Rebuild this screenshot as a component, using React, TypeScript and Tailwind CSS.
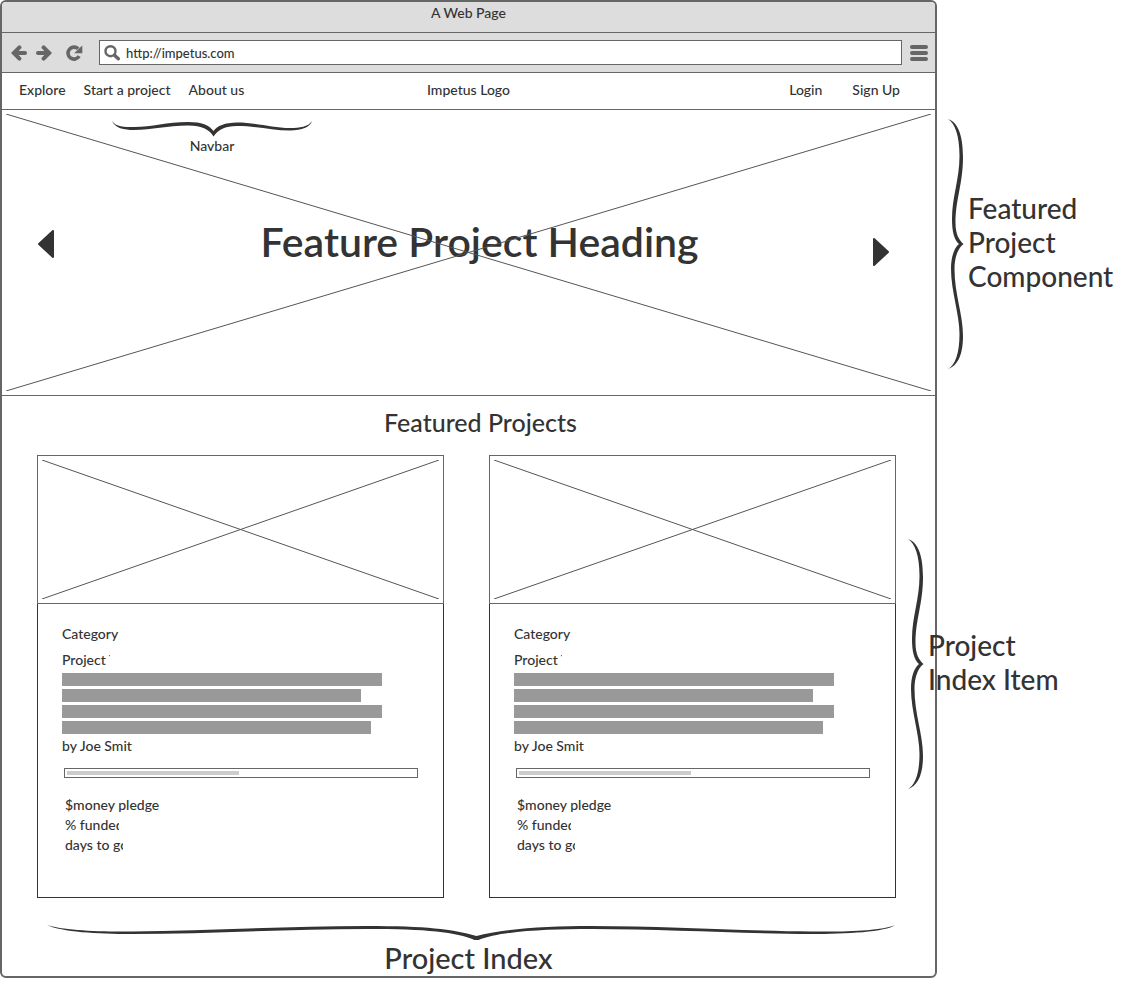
import React from "react";

const LINK = "whitespace-nowrap hover:underline";

function Cross() {
  return (
    <svg aria-hidden="true" className="pointer-events-none absolute inset-1 h-[calc(100%-8px)] w-[calc(100%-8px)]" viewBox="0 0 100 100" preserveAspectRatio="none" fill="none" stroke="#555">
      <path d="M0 0L100 100M0 100L100 0" vectorEffect="non-scaling-stroke" />
    </svg>
  );
}

function SideBrace() {
  return (
    <svg aria-hidden="true" className="h-[250px] w-4 shrink-0" viewBox="0 0 16 250" fill="#333">
      <path d="M0 0C9 3 15 14 15 38C15 65 7.5 80 7.5 104C7.5 115 11 121 15.5 125C9 130 6.5 140 6.5 150C6.5 175 15 195 15 217C15 237 9 247 0 250C7 246 11.5 235 11.5 215C11.5 195 3 172 3 150C3 138 6 129 11 125C6 121 4 112 4 100C4 78 11.5 60 11.5 37C11.5 17 7 4 0 0Z" />
    </svg>
  );
}

function NavBrace() {
  return (
    <svg aria-hidden="true" className="h-4 w-[200px]" viewBox="0 0 200 16" fill="#333">
      <path d="M0 0C3 7 12 9 22 9C40 9 55 4.5 76 4.5C90 4.5 98 9 101.5 15.5C106 9 113 5 125 5C145 5 160 9.5 178 9.5C190 9.5 198 6 200 0C196 6 188 7 178 7C160 7 145 1.5 125 1.5C113 1.5 105 5 101.5 10C97 4 90 1 76 1C55 1 40 6 22 6C12 6 4 6 0 0Z" />
    </svg>
  );
}

function IndexBrace() {
  return (
    <svg aria-hidden="true" className="h-4 w-full" viewBox="0 0 850 16" preserveAspectRatio="none" fill="#333">
      <path d="M0 0C15 7 50 9 85 9C160 9 240 4 320 4C380 4 410 7 428 15H432C455 6 500 4 545 4C620 4 700 9 765 9C800 9 840 7 849 0C835 6 800 7 765 6.5C700 6 620 1 545 1C500 1 455 4 430 11C405 4 380 1 320 1C240 1 160 6 85 6.5C50 7 15 5 0 0Z" />
    </svg>
  );
}

function BackIcon() {
  return (
    <svg aria-hidden="true" className="size-4" viewBox="0 0 16 16" fill="none" stroke="#666" strokeWidth="4">
      <path d="M14 8H5" strokeLinecap="round" />
      <path d="M8.4 2.4L2.8 8L8.4 13.6" strokeLinecap="round" strokeLinejoin="miter" />
    </svg>
  );
}

function ReloadIcon() {
  return (
    <svg aria-hidden="true" className="h-4 w-[17px]" viewBox="0 0 17 16" fill="none">
      <path d="M12.2 3.8A6 6 0 1 0 13.2 11.2" stroke="#666" strokeWidth="3.6" />
      <path d="M16.3 0.5V8.2H8.2L11 5.4Z" fill="#666" />
    </svg>
  );
}

function SearchIcon() {
  return (
    <svg aria-hidden="true" className="size-4 shrink-0" viewBox="0 0 16 16" fill="none" stroke="#666">
      <circle cx="6.5" cy="6.2" r="5" strokeWidth="2.4" />
      <path d="M10.5 10.2L14.3 13.8" strokeWidth="3.4" strokeLinecap="round" />
    </svg>
  );
}

function MenuIcon() {
  return (
    <svg aria-hidden="true" className="h-4 w-[18px]" viewBox="0 0 18 16" stroke="#666" strokeWidth="4" strokeLinecap="round">
      <path d="M2 2H16M2 8H16M2 14H16" />
    </svg>
  );
}

function Triangle({ flip = false }: { flip?: boolean }) {
  return (
    <svg aria-hidden="true" className={flip ? "h-7 w-4 rotate-180" : "h-7 w-4"} viewBox="0 0 16 28" fill="#333" stroke="#333" strokeWidth="2" strokeLinejoin="round">
      <path d="M15 1V27L1 14Z" />
    </svg>
  );
}

function ProjectCard() {
  return (
    <article className="min-w-0 flex-1 border border-[#333]">
      <div className="relative -mx-px -mt-px h-[149px] border border-[#666]">
        <Cross />
      </div>
      <div className="px-6 pt-5 pb-[42px] leading-5">
        <p className="whitespace-nowrap">Category</p>
        <h3 className="mt-[6px] w-12 overflow-hidden whitespace-nowrap">Project Title</h3>
        <div className="mt-[3px] flex max-w-[320px] flex-col gap-[3px]">
          <div className="h-[13px] bg-[#999]" />
          <div className="h-[13px] w-[93.5%] bg-[#999]" />
          <div className="h-[13px] bg-[#999]" />
          <div className="h-[13px] w-[96.5%] bg-[#999]" />
        </div>
        <p className="mt-[2px] whitespace-nowrap">by Joe Smit</p>
        <div role="progressbar" aria-label="Funding" aria-valuenow={49} aria-valuemin={0} aria-valuemax={100} className="mt-3 mr-px ml-[2px] h-[10px] border border-[#666] p-[2px]">
          <div className="h-1 w-[49.5%] bg-[#ccc]" />
        </div>
        <div className="mt-[17px] ml-[3px]">
          <p className="whitespace-nowrap">$money pledge</p>
          <p className="w-[54px] overflow-hidden whitespace-nowrap">% funded</p>
          <p className="w-[58px] overflow-hidden whitespace-nowrap">days to go</p>
        </div>
      </div>
    </article>
  );
}

export default function App() {
  return (
    <div className="flex min-h-screen items-start bg-white font-['Lato','Open_Sans',sans-serif] text-[14px] leading-5 font-medium text-[#333]">
      <main className="min-w-0 flex-1 overflow-hidden rounded-md border-2 border-[#666]">
        <header>
          <div className="border-b border-[#666] bg-[#ddd] pt-px pb-[9px] text-center">A Web Page</div>
          <div className="flex items-center border-b border-[#666] bg-[#ddd] py-[7px] pr-[7px] pl-[9px]">
            <button aria-label="Back"><BackIcon /></button>
            <button aria-label="Forward" className="ml-[9px] rotate-180"><BackIcon /></button>
            <button aria-label="Reload" className="ml-[14px]"><ReloadIcon /></button>
            <label className="mr-2 ml-4 flex h-[25px] flex-1 items-center gap-[6px] border border-[#666] bg-white px-1">
              <SearchIcon />
              <input aria-label="Address" defaultValue="http://impetus.com" className="min-w-0 flex-1 bg-transparent text-[13px] outline-none" />
            </label>
            <button aria-label="Menu"><MenuIcon /></button>
          </div>
        </header>
        <nav className="grid grid-cols-[1fr_auto_1fr] items-center border-b border-[#666] px-[17px] pt-[7px] pb-[9px]">
          <div className="flex gap-[18px]">
            <a href="#explore" className={LINK}>Explore</a>
            <a href="#start" className={LINK}>Start a project</a>
            <a href="#about" className={LINK}>About us</a>
          </div>
          <a href="#home" className={LINK}>Impetus Logo</a>
          <div className="flex justify-end gap-[30px] pr-[18px]">
            <a href="#login" className={LINK}>Login</a>
            <a href="#signup" className={LINK}>Sign Up</a>
          </div>
        </nav>
        <section className="relative border-b border-[#666] pt-[11px] pb-[124px]">
          <Cross />
          <div className="ml-[110px] flex w-[200px] flex-col items-center">
            <NavBrace />
            <span className="leading-[18px]">Navbar</span>
          </div>
          <div className="mt-[62px] flex items-center justify-between pr-[46px] pl-9">
            <button aria-label="Previous project"><Triangle /></button>
            <h1 className="pb-1 pl-8 text-[41px] leading-[50px] font-semibold">Feature Project Heading</h1>
            <button aria-label="Next project" className="mt-4"><Triangle flip /></button>
          </div>
        </section>
        <section className="pb-[2px]">
          <h2 className="pt-2 pl-6 text-center text-[25px] leading-9">Featured Projects</h2>
          <div className="mt-[15px] flex gap-[45px] pr-[39px] pl-[35px]">
            <ProjectCard />
            <ProjectCard />
          </div>
          <div className="mt-[27px] pr-[39px] pl-[45px]">
            <IndexBrace />
          </div>
          <p className="text-center text-[29px] leading-[33px]">Project Index</p>
        </section>
      </main>
      <aside className="z-10 flex w-[191px] shrink-0 flex-col gap-[170px] pt-[119px] text-[28px] leading-[34px]">
        <div className="ml-[11px] flex items-center gap-1">
          <SideBrace />
          <p className="pb-1">Featured<br />Project<br />Component</p>
        </div>
        <div className="-ml-[29px] flex items-center gap-1">
          <SideBrace />
          <p className="pb-1">Project<br />Index Item</p>
        </div>
      </aside>
    </div>
  );
}
